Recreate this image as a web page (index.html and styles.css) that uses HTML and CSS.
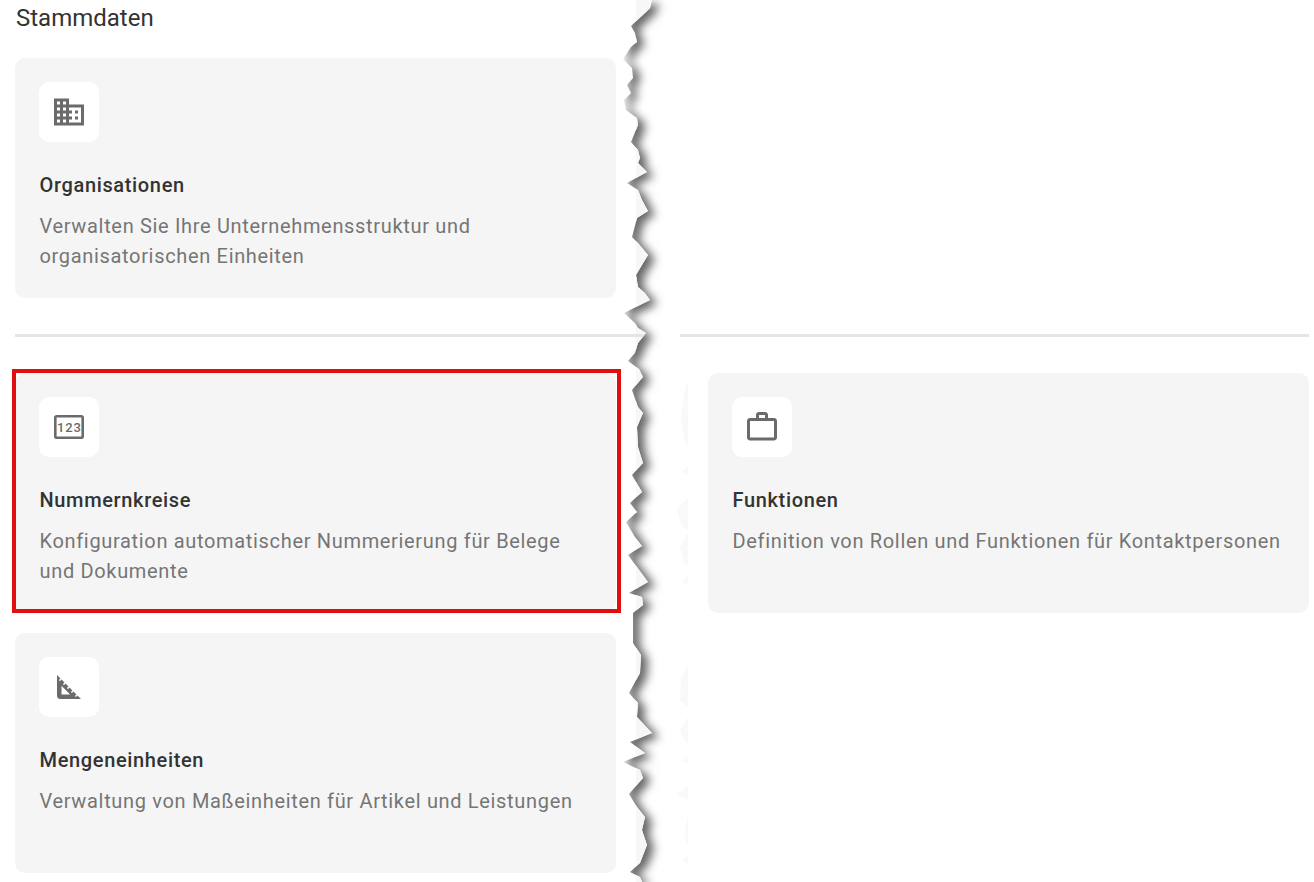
FILE: index.html
```html
<!DOCTYPE html>
<html lang="de">
  <head>
    <meta charset="UTF-8" />
    <meta name="viewport" content="width=device-width, initial-scale=1.0" />
    <title>Stammdaten</title>
    <link rel="stylesheet" href="styles.css">
  </head>
  <body>
    <h2 class="section-title">Stammdaten</h2>

    <div class="card-grid">
      <div class="card">
        <div class="card-icon">
          <svg viewBox="0 0 24 24" width="36" height="36"><path d="M12 7V3H2v18h20V7H12zM6 19H4v-2h2v2zm0-4H4v-2h2v2zm0-4H4V9h2v2zm0-4H4V5h2v2zm4 12H8v-2h2v2zm0-4H8v-2h2v2zm0-4H8V9h2v2zm0-4H8V5h2v2zm10 12h-8v-2h2v-2h-2v-2h2v-2h-2V9h8v10zm-2-8h-2v2h2v-2zm0 4h-2v2h2v-2z"/></svg>
        </div>
        <h3 class="card-title">Organisationen</h3>
        <p class="card-text">Verwalten Sie Ihre Unternehmensstruktur und organisatorischen Einheiten</p>
      </div>
    </div>

    <hr class="divider" />

    <div class="card-grid">
      <div class="card card-marked">
        <div class="card-icon">
          <svg viewBox="0 0 36 36" width="36" height="36">
            <rect class="icon-frame" x="4.3" y="7.3" width="27.4" height="21.4" rx="1.5" />
            <text class="icon-digits" x="18.3" y="22.8">123</text>
          </svg>
        </div>
        <h3 class="card-title">Nummernkreise</h3>
        <p class="card-text">Konfiguration automatischer Nummerierung für Belege und Dokumente</p>
      </div>
      <div class="card">
        <div class="card-icon">
          <svg viewBox="0 0 24 24" width="36" height="36"><path fill-rule="evenodd" d="M14 6V4h-4v2h4zM4 8v11h16V8H4zm16-2c1.11 0 2 .89 2 2v11c0 1.11-.89 2-2 2H4c-1.11 0-2-.89-2-2l.01-11c0-1.11.88-2 1.99-2h4V4c0-1.11.89-2 2-2h4c1.11 0 2 .89 2 2v2h4z"/></svg>
        </div>
        <h3 class="card-title">Funktionen</h3>
        <p class="card-text">Definition von Rollen und Funktionen für Kontaktpersonen</p>
      </div>
      <div class="card">
        <div class="card-icon">
          <svg viewBox="0 0 24 24" width="36" height="36"><path d="M17.66 17.66l-1.06 1.06-.71-.71 1.06-1.06-1.94-1.94-1.06 1.06-.71-.71 1.06-1.06-1.94-1.94-1.06 1.06-.71-.71 1.06-1.06L9.7 9.7l-1.06 1.06-.71-.71 1.06-1.06-1.94-1.94-1.06 1.06-.71-.71 1.06-1.06L4 4v14c0 1.1.9 2 2 2h14l-2.34-2.34zM7 17v-5.76L12.76 17H7z"/></svg>
        </div>
        <h3 class="card-title">Mengeneinheiten</h3>
        <p class="card-text">Verwaltung von Maßeinheiten für Artikel und Leistungen</p>
      </div>
    </div>

    <!-- torn paper effect across the screenshot -->
    <svg class="tear" viewBox="621 0 69 882" width="69" height="882">
      <defs>
        <polygon id="tear-edge" points="621,0 652,0 650,8 645,13 631,26 635,33 637,42 631,47 623,59 632,68 633,78 627,85 631,93 624,100 626,110 637,118 638,125 631,142 638,150 640,158 638,163 647,172 627,183 638,190 642,200 648,211 637,218 632,237 638,243 648,255 636,275 638,287 645,293 650,300 624,313 635,323 638,328 646,333 638,343 635,353 628,361 639,369 643,377 632,390 638,407 643,413 637,427 638,447 643,463 632,475 642,492 630,503 637,512 626,522 635,537 642,546 628,555 637,567 648,582 629,593 642,597 643,605 633,613 633,643 641,655 640,673 629,693 638,703 637,717 652,733 630,742 645,753 623,762 640,770 643,778 629,794 637,807 645,817 642,830 647,845 640,863 630,872 640,877 642,882 621,882" />
        <clipPath id="tear-clip"><use href="#tear-edge" /></clipPath>
      </defs>
      <rect class="tear-cover" x="621" y="0" width="59" height="882" />
      <g class="tear-ghost">
        <polygon points="688,380 684,395 681,420 685,443 688,445" />
        <polygon points="688,466 682,472 688,476" />
        <polygon points="688,497 677,510 682,527 688,530" />
        <polygon points="688,533 680,548 684,563 688,565" />
        <polygon points="688,575 682,582 688,585" />
        <polygon points="688,663 681,680 680,700 688,707" />
        <polygon points="688,717 680,730 684,740 688,744" />
        <polygon points="688,756 682,761 688,764" />
        <polygon points="688,786 677,794 688,800" />
        <polygon points="688,816 684,835 688,845" />
        <polygon points="688,856 682,860 688,864" />
      </g>
      <use class="tear-paper" href="#tear-edge" />
      <g clip-path="url(#tear-clip)">
        <rect class="tear-strip" x="636" y="0" width="20" height="882" />
        <rect class="tear-line" x="621" y="334" width="30" height="3" />
      </g>
    </svg>
  </body>
</html>
```

FILE: styles.css
```css
body {
  font-family: Roboto, Arial, sans-serif;
  margin: 0;
  padding: 0 5px 0 15px;
  background-color: #ffffff;
  color: #333333;
}
.section-title {
  margin: 0;
  padding: 4px 0 0 1px;
  height: 58px;
  box-sizing: border-box;
  font-size: 24px;
  line-height: 28px;
  font-weight: 400;
}
.card-grid {
  display: grid;
  grid-template-columns: 601px 601px;
  grid-auto-rows: 240px;
  column-gap: 92px;
  row-gap: 20px;
}
.card {
  position: relative;
  box-sizing: border-box;
  padding: 24px;
  background-color: #f5f5f5;
  border-radius: 10px;
}
.card-marked::after {
  content: "";
  position: absolute;
  top: -4px;
  left: -3px;
  right: -5px;
  bottom: 0;
  border: 4px solid #e01010;
}
.card-icon {
  display: flex;
  align-items: center;
  justify-content: center;
  width: 60px;
  height: 60px;
  margin-bottom: 28px;
  background-color: #ffffff;
  border-radius: 10px;
}
.card-icon svg {
  fill: #6b6b6b;
}
.icon-frame {
  fill: none;
  stroke: #6b6b6b;
  stroke-width: 2.6;
}
.icon-digits {
  font-size: 13px;
  font-weight: 500;
  letter-spacing: 0.8px;
  text-anchor: middle;
}
.card-title {
  margin: 0 0 11px;
  padding-left: 0.5px;
  font-size: 20px;
  line-height: 30px;
  font-weight: 500;
  letter-spacing: 0.65px;
}
.card-text {
  margin: 0;
  padding-left: 0.5px;
  font-size: 20px;
  line-height: 30px;
  letter-spacing: 0.67px;
  color: #757575;
}
.divider {
  height: 3px;
  margin: 36px 0;
  border: none;
  background-color: #e6e6e6;
}
.tear {
  position: absolute;
  top: 0;
  left: 621px;
}
.tear-cover {
  fill: #ffffff;
}
.tear-ghost {
  fill: #f9f9f9;
}
.tear-paper {
  fill: #ffffff;
  filter: drop-shadow(7px 4px 5px #666666);
}
.tear-strip {
  fill: #f7f7f7;
}
.tear-line {
  fill: #e6e6e6;
}
```
